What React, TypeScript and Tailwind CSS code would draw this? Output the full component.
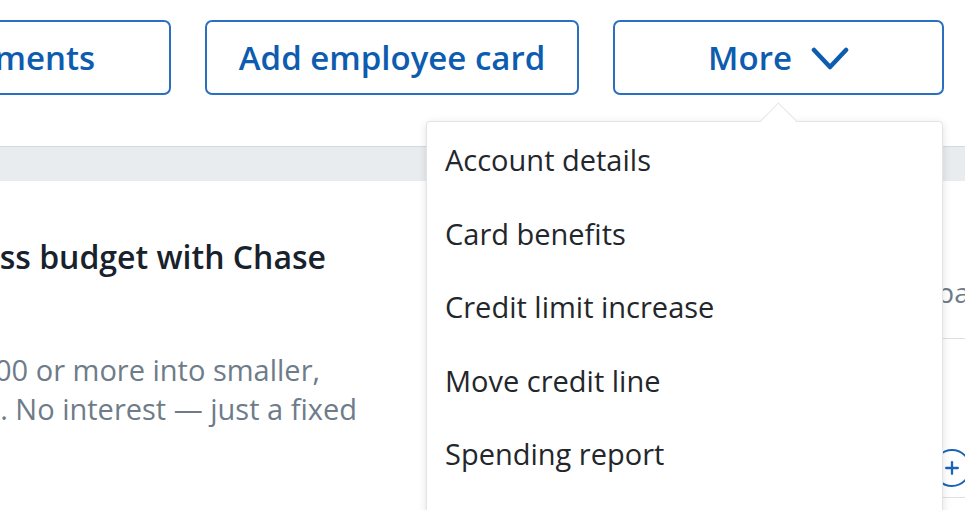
import { Plus } from 'lucide-react'

const menuItems = [
  'Account details',
  'Card benefits',
  'Credit limit increase',
  'Move credit line',
  'Spending report',
]

export default function App() {
  return (
    <div className="w-[965px] h-[530px] bg-white overflow-hidden font-['Open_Sans',sans-serif]">
      <div className="relative h-[510px] overflow-hidden">
        {/* Action buttons */}
        <div className="flex justify-end gap-[34px] w-[944px] pt-[20px]">
          <button className="shrink-0 h-[75px] px-[74px] border-2 border-[#2a6fc0] rounded-[7px] text-[#0d5cb0] text-[33px] font-semibold whitespace-nowrap">
            Statements
          </button>
          <button className="shrink-0 h-[75px] w-[374px] border-2 border-[#2a6fc0] rounded-[7px] text-[#0d5cb0] text-[33px] font-semibold whitespace-nowrap">
            Add employee card
          </button>
          <button className="shrink-0 h-[75px] w-[331px] border-2 border-[#2a6fc0] rounded-[7px] text-[#0d5cb0] text-[33px] font-semibold flex items-center justify-center gap-[19px]">
            <span>More</span>
            <svg width="38" height="24" viewBox="0 0 38 24" fill="none" className="mt-[2px]">
              <polyline points="3,3 19,20 35,3" stroke="#0d5cb0" strokeWidth="4.5" strokeLinecap="round" strokeLinejoin="round" />
            </svg>
          </button>
        </div>

        {/* Section band */}
        <div className="mt-[51px] h-[35px] bg-[#e9ecef] border-t border-[#d5d9de]" />

        {/* Content */}
        <div className="flex">
          <div className="w-[426px] shrink-0">
            <div className="flex justify-end w-[326px] mt-[54px]">
              <h2 className="whitespace-nowrap text-[32px] leading-[44px] font-semibold text-[#18222d]">
                Manage your business budget with Chase
              </h2>
            </div>
            <div className="mt-[71px] text-[29px] leading-[39px] text-[#6e7c89]">
              <div className="flex justify-end w-[320px]">
                <span className="whitespace-nowrap">Split purchases of $500 or more into smaller,</span>
              </div>
              <div className="flex justify-end w-[357px]">
                <span className="whitespace-nowrap">monthly payments. No interest — just a fixed</span>
              </div>
            </div>
          </div>
          <div className="ml-[517px] shrink-0 w-[40px]">
            <div className="mt-[91px] -ml-[6px] text-[28px] leading-[40px] text-[#6e7c89] whitespace-nowrap">pay</div>
            <div className="mt-[26px] border-t border-[#dde1e5]" />
            <div className="mt-[110px] -ml-[10px] w-[38px] h-[38px] rounded-full border-[2.5px] border-[#1a64b8] flex items-center justify-center">
              <Plus className="w-[20px] h-[20px] text-[#1a64b8]" strokeWidth={2.75} />
            </div>
            <div className="mt-[10px] border-t border-[#dde1e5]" />
          </div>
        </div>

        {/* More dropdown */}
        <div className="absolute left-[426px] top-[121px] w-[517px] h-[420px] bg-white border border-[#e2e4e6] rounded-[4px] shadow-[0_2px_8px_rgba(0,0,0,0.12)]">
          <div className="absolute left-[338px] -top-[14px] w-[27px] h-[27px] rotate-45 bg-white border-l border-t border-[#e2e4e6]" />
          <ul className="relative pt-[1px]">
            {menuItems.map((item) => (
              <li key={item} className="h-[73.5px] flex items-center pl-[18px] text-[29px] text-[#23272b]">
                {item}
              </li>
            ))}
          </ul>
        </div>
      </div>
    </div>
  )
}
